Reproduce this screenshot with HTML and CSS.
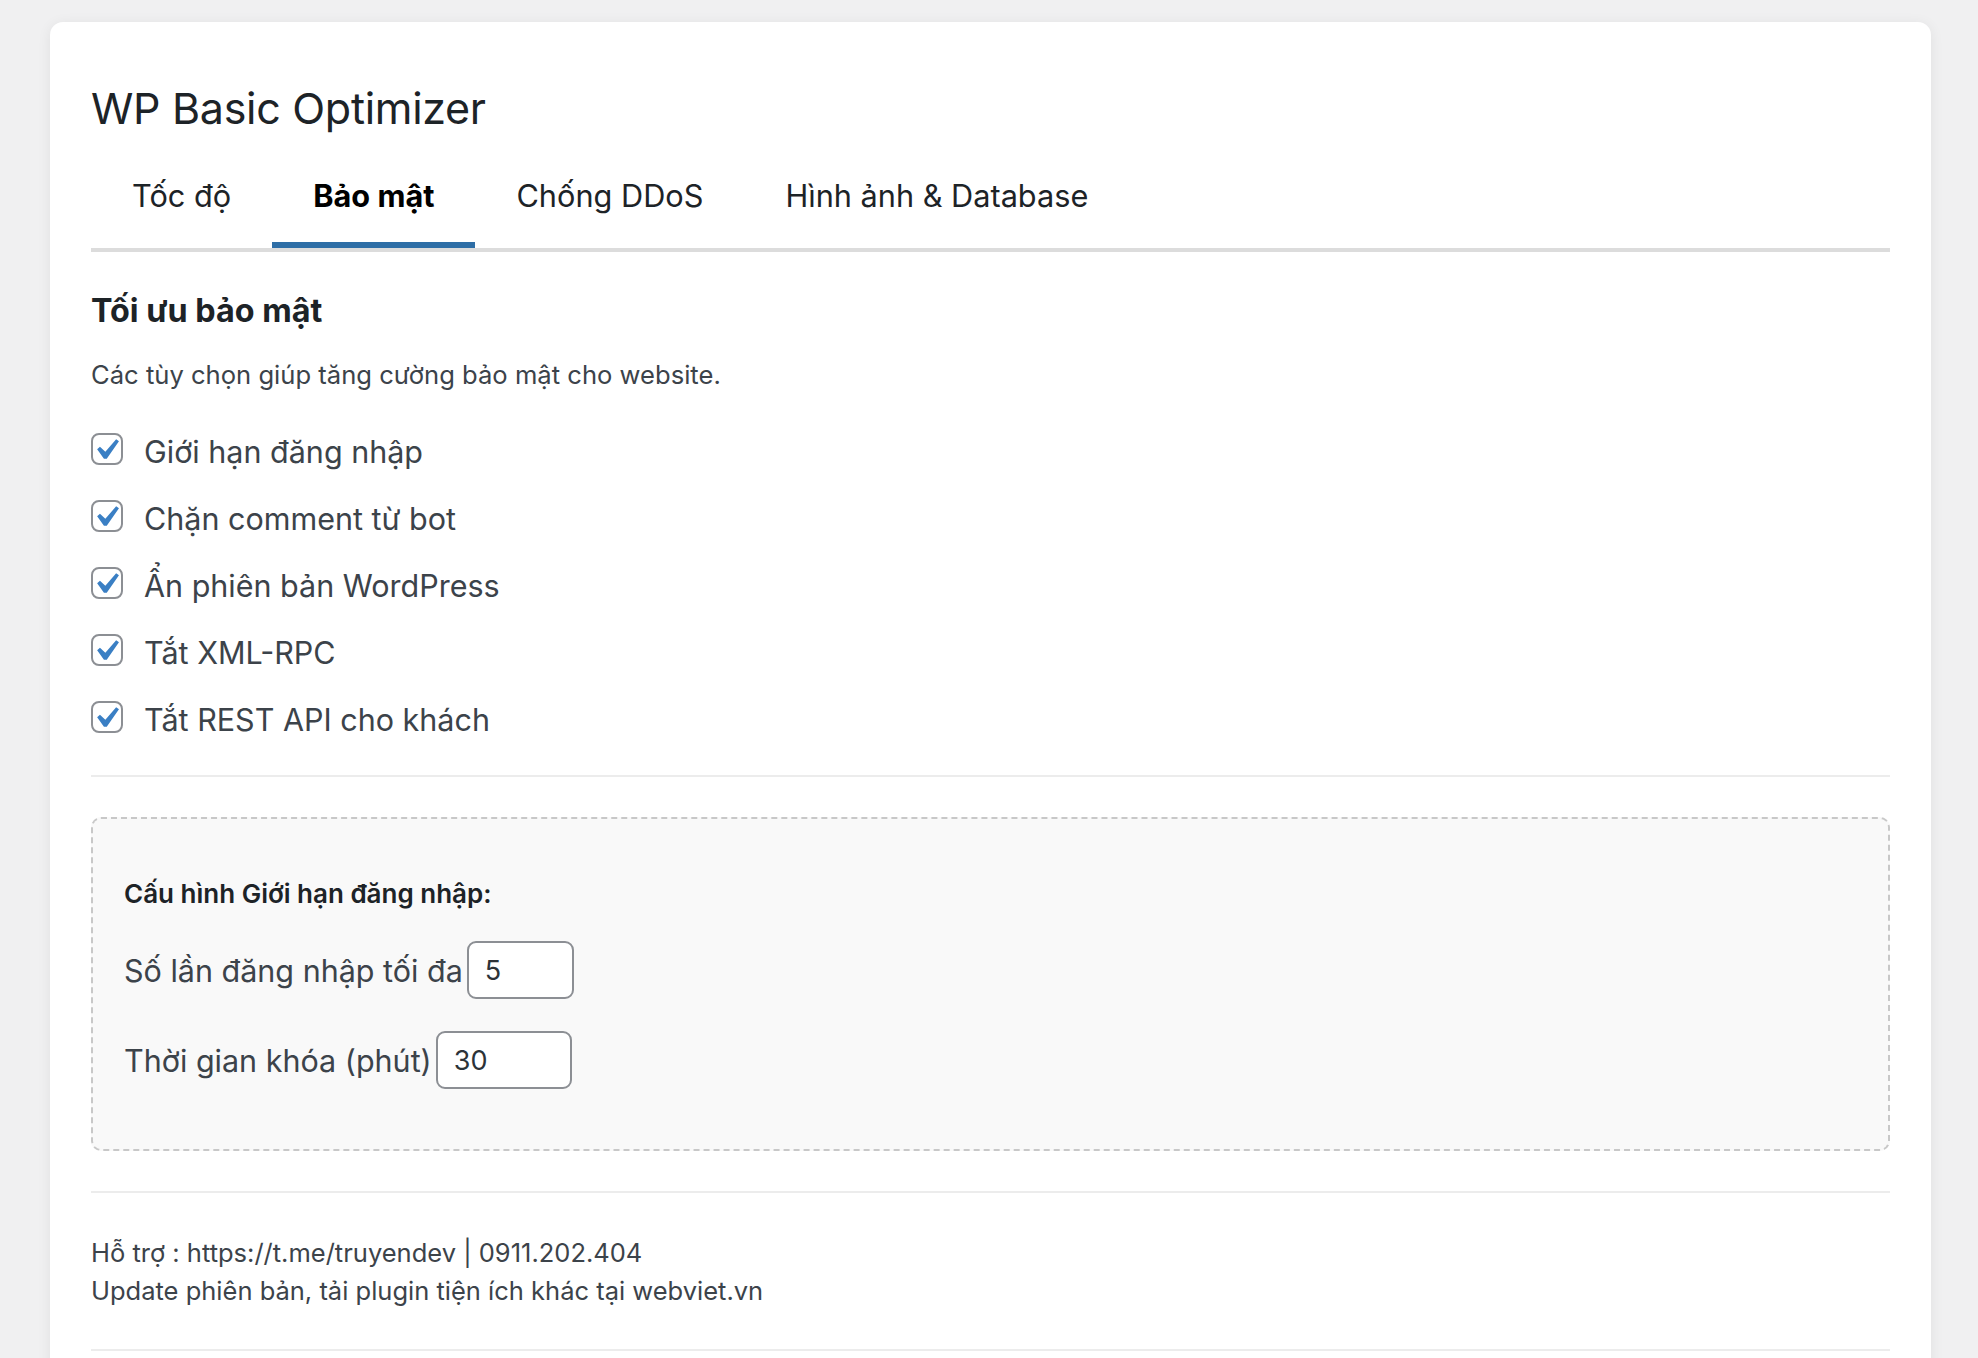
FILE: index.html
```html
<!DOCTYPE html>
<html lang="vi">
<head>
    <meta charset="UTF-8">
    <title>WP Basic Optimizer</title>
    <link rel="stylesheet" href="styles.css">
</head>
<body>
<div class="wrap">
    <h1>WP Basic Optimizer</h1>
    <nav class="nav-tab-wrapper">
        <a class="nav-tab" href="#">Tốc độ</a>
        <a class="nav-tab nav-tab-active" href="#">Bảo mật</a>
        <a class="nav-tab" href="#">Chống DDoS</a>
        <a class="nav-tab" href="#">Hình ảnh &amp; Database</a>
    </nav>

    <div class="tab-content">
        <h2>Tối ưu bảo mật</h2>
        <p class="description">Các tùy chọn giúp tăng cường bảo mật cho website.</p>

        <ul class="option-list">
            <li><label><span class="cb"><svg viewBox="0 0 20 20"><path d="M14.83 4.89l1.34.94-5.81 8.38H9.02L5.78 9.67l1.34-1.25 2.57 2.4z"/></svg></span>Giới hạn đăng nhập</label></li>
            <li><label><span class="cb"><svg viewBox="0 0 20 20"><path d="M14.83 4.89l1.34.94-5.81 8.38H9.02L5.78 9.67l1.34-1.25 2.57 2.4z"/></svg></span>Chặn comment từ bot</label></li>
            <li><label><span class="cb"><svg viewBox="0 0 20 20"><path d="M14.83 4.89l1.34.94-5.81 8.38H9.02L5.78 9.67l1.34-1.25 2.57 2.4z"/></svg></span>Ẩn phiên bản WordPress</label></li>
            <li><label><span class="cb"><svg viewBox="0 0 20 20"><path d="M14.83 4.89l1.34.94-5.81 8.38H9.02L5.78 9.67l1.34-1.25 2.57 2.4z"/></svg></span>Tắt XML-RPC</label></li>
            <li><label><span class="cb"><svg viewBox="0 0 20 20"><path d="M14.83 4.89l1.34.94-5.81 8.38H9.02L5.78 9.67l1.34-1.25 2.57 2.4z"/></svg></span>Tắt REST API cho khách</label></li>
        </ul>

        <hr class="sep">

        <div class="config-box">
            <p class="config-title">Cấu hình Giới hạn đăng nhập:</p>
            <p class="config-row"><label>Số lần đăng nhập tối đa</label> <input class="input-sm" type="text" value="5"></p>
            <p class="config-row"><label>Thời gian khóa (phút)</label> <input class="input-md" type="text" value="30"></p>
        </div>

        <hr class="sep">

        <div class="support">
            <p>Hỗ trợ : https://t.me/truyendev | 0911.202.404</p>
            <p>Update phiên bản, tải plugin tiện ích khác tại webviet.vn</p>
        </div>

        <hr class="sep">
    </div>
</div>
</body>
</html>
```

FILE: styles.css
```css
html,body,h1,h2,p,ul,li,hr{margin:0;padding:0;}
ul{list-style-type:none;}
body{background:#f0f0f1;font-family:Inter,"Noto Sans",sans-serif;color:#3c434a;}

.wrap{margin:22px 47px 0 50px;padding:58px 41px 60px 41px;background:#fff;border-radius:13px;box-shadow:0 2px 14px rgba(0,0,0,0.07);}
.wrap h1{font-size:43px;line-height:56px;font-weight:400;color:#1d2327;letter-spacing:-0.3px;}

.nav-tab-wrapper{display:flex;margin-top:24px;border-bottom:4px solid #dcdcdc;}
.nav-tab{display:block;padding:16px 41px 26px;font-size:30.7px;line-height:40px;color:#1d2327;text-decoration:none;border-bottom:6px solid transparent;}
.nav-tab-active{font-weight:700;color:#000;border-bottom-color:#2e6ea6;}

.tab-content h2{margin-top:39px;font-size:32.3px;line-height:40px;font-weight:700;color:#1d2327;}
.description{margin-top:26px;font-size:25.6px;line-height:36px;}

.option-list{margin-top:32px;display:flex;flex-direction:column;gap:15px;}
.option-list label{display:flex;align-items:center;gap:21px;height:52px;font-size:30.5px;color:#3c434a;}
.cb{position:relative;flex:none;width:28px;height:28px;margin-top:-5px;border:2px solid #8c8f94;border-radius:8px;background:#fff;}
.cb svg{position:absolute;left:-8px;top:-6px;width:42px;height:42px;fill:#3a7fc4;}

.sep{border:0;border-top:2px solid #ececec;height:0;}
.option-list + .sep{margin-top:30px;}

.config-box{margin-top:40px;padding:57px 31px 60px;background:#f9f9f9;border:2px dashed #c8c8c8;border-radius:10px;}
.config-title{font-size:26px;line-height:36px;font-weight:600;color:#1d2327;}
.config-row{display:flex;align-items:center;margin-top:29px;font-size:30.5px;color:#3c434a;}
.config-row + .config-row{margin-top:32px;}
.config-row input{height:58px;box-sizing:border-box;margin-left:4px;padding:0 16px;font-family:Inter,"Noto Sans",sans-serif;font-size:27px;color:#2c3338;background:#fff;border:2px solid #8c8f94;border-radius:9px;}
.input-sm{width:107px;}
.input-md{width:136px;}

.config-box + .sep{margin-top:40px;}
.support{margin-top:41px;font-size:25.5px;line-height:38px;color:#3c434a;}
.support + .sep{margin-top:39px;}
```
